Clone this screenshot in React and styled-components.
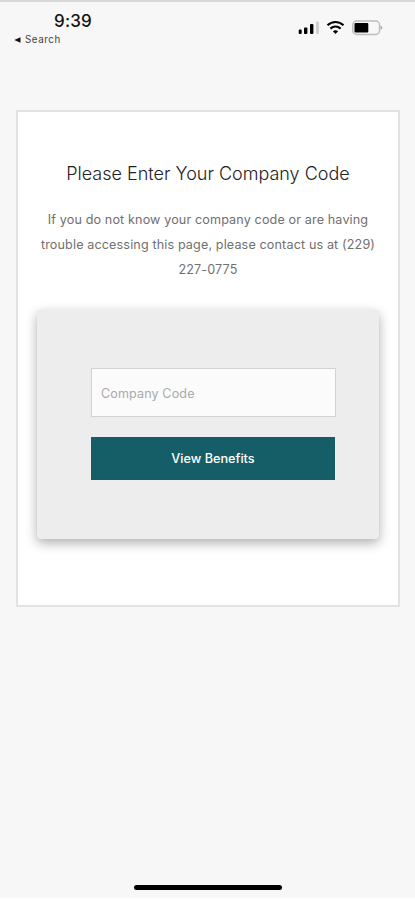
import React from "react";
import styled, { createGlobalStyle } from "styled-components";

const GlobalStyle = createGlobalStyle`
  * {
    box-sizing: border-box;
  }

  body {
    margin: 0;
    background-color: white;
    font-family: Inter, "Liberation Sans", sans-serif;
  }
`;

const Screen = styled.div`
  width: 415px;
  height: 898px;
  display: flex;
  flex-direction: column;
  background-color: #f7f7f7;
  border-top: 2px solid #d9d9d9;
`;

const StatusBar = styled.header`
  height: 108px;
  display: flex;
  justify-content: space-between;
  padding: 9px 31px 0 14px;
`;

const Clock = styled.div`
  padding-left: 40px;
  font-size: 17px;
  line-height: 20px;
  font-weight: 500;
  letter-spacing: 0.2px;
  color: #111;
`;

const BackLink = styled.div`
  display: flex;
  align-items: center;
  gap: 4px;
  margin-top: 3px;
  font-size: 9.8px;
  line-height: 12px;
  letter-spacing: 0.55px;
  color: #444;
`;

const StatusIcons = styled.div`
  height: 18px;
  margin-top: 8px;
`;

const Card = styled.main`
  width: 384px;
  height: 497px;
  margin-left: 16px;
  padding: 50px 19px 0;
  background-color: white;
  border: 2px solid #e2e2e2;
  text-align: center;
`;

const Title = styled.h1`
  margin: 0;
  font-size: 18px;
  line-height: 24px;
  font-weight: 300;
  white-space: nowrap;
  color: #222;
`;

const Message = styled.p`
  margin: 21px 0 0;
  font-size: 12.6px;
  line-height: 25px;
  font-weight: 400;
  letter-spacing: 0.13px;
  white-space: nowrap;
  color: #707070;
`;

const Form = styled.form`
  height: 229px;
  margin-top: 28px;
  padding: 58px 43px 0 54px;
  background-color: #ededed;
  border-radius: 4px;
  box-shadow: 0 4px 12px rgba(0, 0, 0, 0.32);
`;

const CodeInput = styled.input`
  display: block;
  width: 245px;
  height: 49px;
  padding: 1px 9px 0;
  background-color: #fbfbfb;
  border: 1px solid #d2d2d2;
  border-radius: 0;
  font-family: inherit;
  font-size: 12.6px;
  letter-spacing: 0.1px;
  outline: none;

  &::placeholder {
    color: #aaa;
    opacity: 1;
  }
`;

const SubmitButton = styled.button`
  display: block;
  width: 244px;
  height: 43px;
  margin-top: 20px;
  padding: 0 0 1px;
  background-color: #165e67;
  color: white;
  border: none;
  font-family: inherit;
  font-size: 12.7px;
  font-weight: 500;
  cursor: pointer;
`;

const HomeIndicator = styled.div`
  width: 148px;
  height: 5px;
  margin: auto 0 8px 134px;
  border-radius: 3px;
  background-color: black;
`;

const SignalIcons = () => (
  <svg width="86" height="18" viewBox="0 0 86 18" fill="none">
    <g fill="#000">
      <rect x="0.7" y="10.5" width="3" height="4.5" rx="1" />
      <rect x="6" y="8.5" width="3.4" height="6.5" rx="1" />
      <rect x="12" y="5" width="3.4" height="10" rx="1" />
      <rect x="18" y="2.5" width="3" height="12.5" rx="1" fill="#d0d0d0" />
    </g>
    <g stroke="#000" strokeWidth="2.1">
      <path d="M29.5 6.3C34.2 1.8 40.8 1.8 45.5 6.3" />
      <path d="M32.4 9.6C35.5 6.8 39.5 6.8 42.6 9.6" />
    </g>
    <path d="M34.9 12.2C36.5 10.9 38.5 10.9 40.1 12.2L37.5 15Z" fill="#000" />
    <rect x="54.8" y="2.1" width="26.8" height="13.4" rx="4" stroke="#bdbdbd" strokeWidth="1.5" />
    <rect x="56.5" y="4" width="13.8" height="9.4" rx="1" fill="#000" />
    <path d="M82.6 6.7C85 7.5 85 9.7 82.6 10.5Z" fill="#aaa" />
  </svg>
);

const App = () => {
  return (
    <>
      <GlobalStyle />
      <Screen>
        <StatusBar>
          <div>
            <Clock>9:39</Clock>
            <BackLink>
              <svg width="7" height="6" viewBox="0 0 7 6">
                <path d="M0.3 3L6.5 0.2V5.8Z" fill="#111" />
              </svg>
              Search
            </BackLink>
          </div>
          <StatusIcons>
            <SignalIcons />
          </StatusIcons>
        </StatusBar>
        <Card>
          <Title>Please Enter Your Company Code</Title>
          <Message>
            If you do not know your company code or are having
            <br />
            trouble accessing this page, please contact us at (229)
            <br />
            227-0775
          </Message>
          <Form onSubmit={(e) => e.preventDefault()}>
            <CodeInput placeholder="Company Code" />
            <SubmitButton type="submit">View Benefits</SubmitButton>
          </Form>
        </Card>
        <HomeIndicator />
      </Screen>
    </>
  );
};

export default App;
